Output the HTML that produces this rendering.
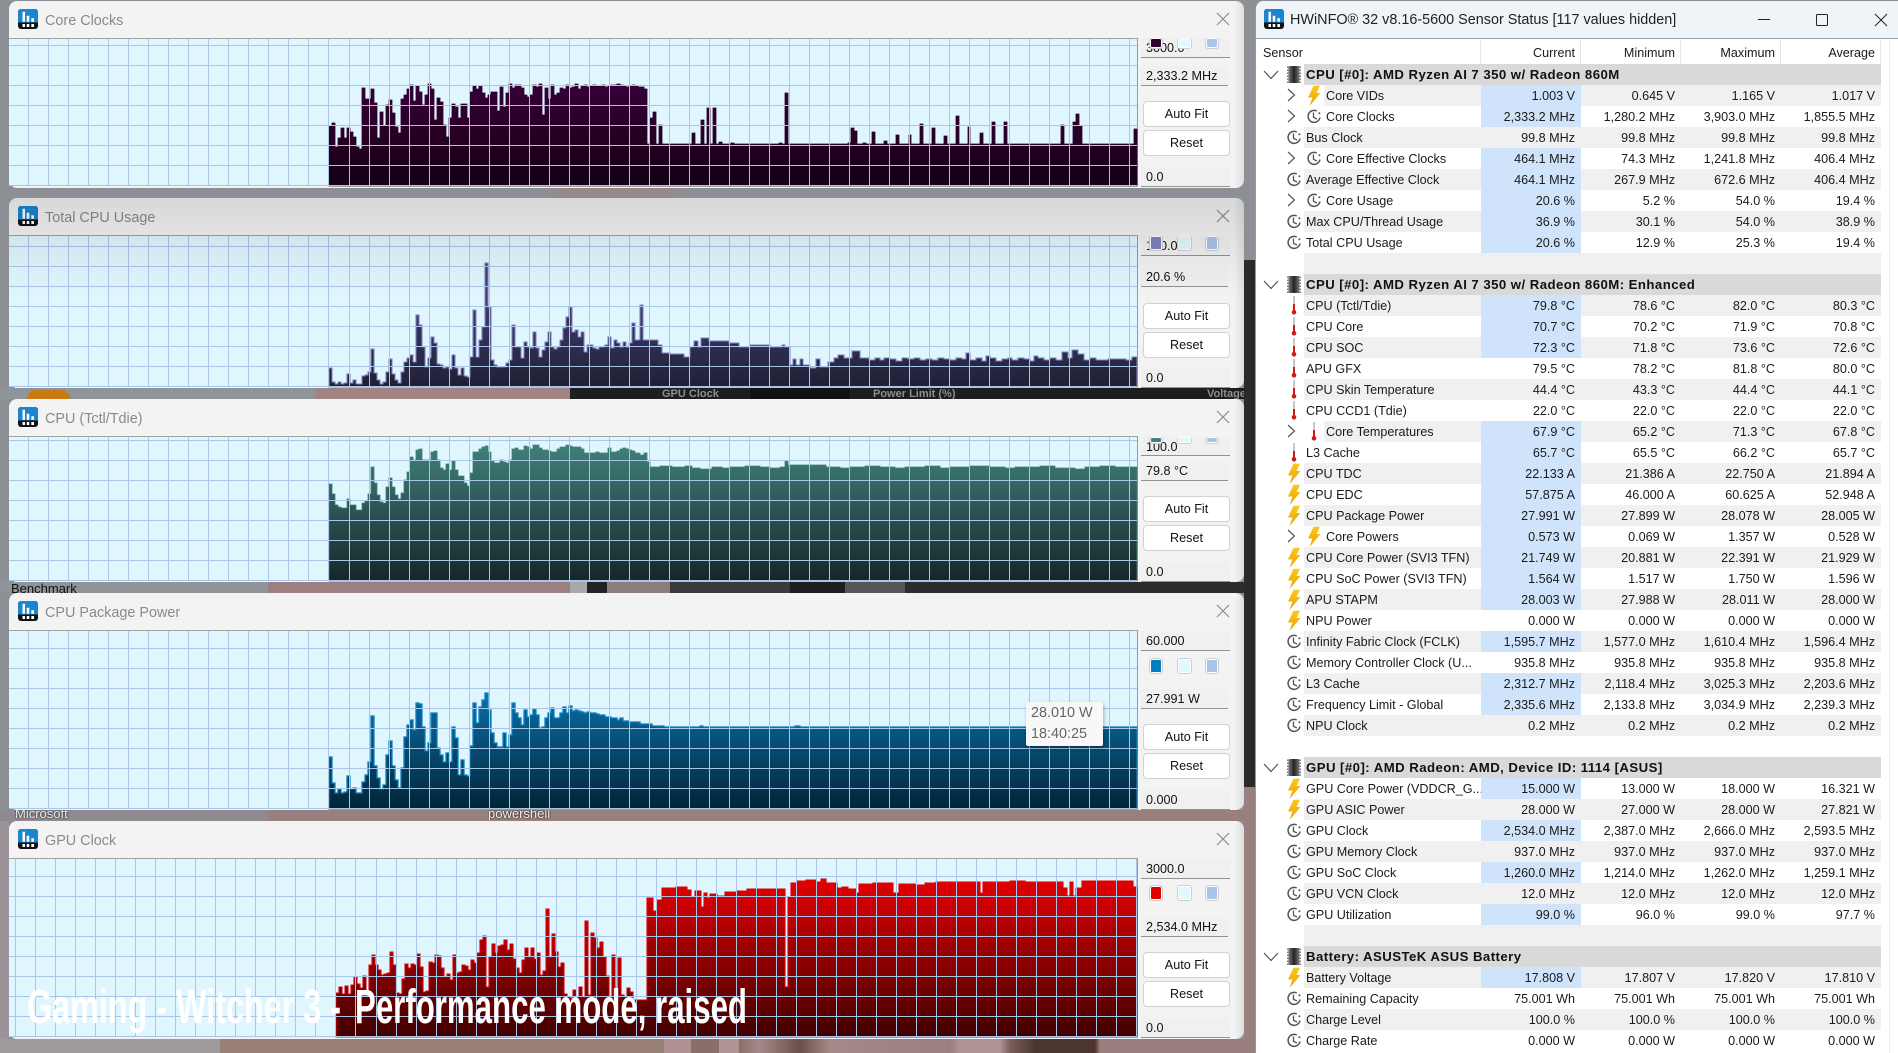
<!DOCTYPE html>
<html lang="en"><head><meta charset="utf-8"><title>HWiNFO Sensor Status</title>
<style>
html{margin:0;padding:0;width:1898px;height:1053px;overflow:hidden}
body{margin:0;padding:0;position:relative;width:1898px;height:1053px;overflow:hidden;background:#8c9094;font-family:"Liberation Sans",sans-serif;color:#1a1a1a}
.a{position:absolute}
.win{position:absolute;left:9px;width:1235px;background:linear-gradient(90deg,#f3f3f3 0,#f3f3f3 1225px,#dedede 1235px);border-radius:8px}
.dk{font-size:11px;color:#ddd;white-space:nowrap;overflow:hidden}
.tb{position:absolute;left:1141px;width:84px;height:19px;padding-left:5px;background:#f0f0f0;border-bottom:1px solid #929292;font-size:12.6px;line-height:20px;color:#111;white-space:nowrap;overflow:hidden}
.vb{width:82px}
.bt{position:absolute;left:1143px;width:85px;height:24px;background:#fff;border:1px solid #d2d2d2;border-radius:4px;font-size:12.6px;line-height:24px;text-align:center;color:#111}
.sw{position:absolute;box-sizing:border-box;width:14px;border:1px solid #cfcfcf;box-shadow:inset 0 0 0 1px #fff;border-radius:3px}
#g{position:absolute;left:0;top:0}
#main{position:absolute;left:1255px;top:1px;width:643px;height:1052px;background:#fff;border-radius:8px 0 0 0;border-left:1px solid #9a9a9a;box-sizing:border-box}
#tbar{position:absolute;left:0;top:0;right:0;height:37px;background:#eff4f9;border-bottom:1px solid #a2a2a2;border-radius:8px 0 0 0}
#ttl{position:absolute;left:1290px;top:10px;font-size:14.4px;line-height:21px;color:#222;white-space:nowrap}
#hd div{position:absolute;top:43px;font-size:12.6px;line-height:21px;color:#1a1a1a}
#hd i{position:absolute;top:40px;width:1px;height:24px;background:#e6e6e6}
#t{position:absolute;left:1255px;top:64px;width:626px;height:990px;overflow:hidden;font-size:12.6px;line-height:22px}
.r{position:relative;height:21px;margin-left:49px;padding-left:2px;white-space:nowrap}
.n{margin-left:69px}
.g{background:#f0f0f0}
.h{background:#d9d9d9;font-weight:bold;color:#111;font-size:13.2px;letter-spacing:.45px}
.r span{position:absolute;top:0;width:94px;height:21px;padding-right:6px;text-align:right;font-weight:normal}
.r span:nth-of-type(1){right:300px}
.r span:nth-of-type(2){right:200px}
.r span:nth-of-type(3){right:100px}
.r span:nth-of-type(4){right:0}
.b span:nth-of-type(1){background:#cfe4fb}
.i{position:absolute;left:-20px;top:0;width:20px;height:21px}
.x{position:absolute;left:-37px;top:2px;width:9px;height:16px}
.d{position:absolute;left:-41px;top:6px;width:16px;height:10px}
</style></head><body>

<div class="a" style="left:555px;top:187px;width:120px;height:11px;background:#95898a"></div>
<div class="a" style="left:0;top:388px;width:1255px;height:11px;background:#8f9499"></div>
<div class="a" style="left:316px;top:388px;width:254px;height:11px;background:#a08484"></div>
<div class="a" style="left:570px;top:388px;width:674px;height:11px;background:#1e1e1e"></div>
<div class="a" style="left:750px;top:388px;width:100px;height:11px;background:#121212"></div>
<div class="a" style="left:27px;top:390px;width:43px;height:9px;background:#c87a10;border-radius:20px 20px 0 0"></div>
<div class="a dk" style="left:662px;top:388px;width:60px;height:11px;color:#8e8e8e;font-weight:bold">GPU Clock</div>
<div class="a dk" style="left:873px;top:388px;width:100px;height:11px;color:#8e8e8e;font-weight:bold">Power Limit (%)</div>
<div class="a dk" style="left:1207px;top:388px;width:37px;height:11px;color:#8e8e8e;font-weight:bold">Voltage</div>
<div class="a" style="left:0;top:582px;width:270px;height:11px;background:#909498"></div>
<div class="a" style="left:268px;top:582px;width:302px;height:11px;background:#9c7f80"></div>
<div class="a" style="left:570px;top:582px;width:17px;height:11px;background:#a9a9ab"></div>
<div class="a" style="left:587px;top:582px;width:20px;height:11px;background:#222"></div>
<div class="a" style="left:607px;top:582px;width:63px;height:11px;background:#8d7d7d"></div>
<div class="a" style="left:670px;top:582px;width:120px;height:11px;background:#3a3a3a"></div>
<div class="a" style="left:790px;top:582px;width:55px;height:11px;background:#1e1e1e"></div>
<div class="a" style="left:845px;top:582px;width:60px;height:11px;background:#555"></div>
<div class="a" style="left:905px;top:582px;width:339px;height:11px;background:#2c2c2c"></div>
<div class="a dk" style="left:11px;top:582px;width:75px;height:11px;line-height:13px;font-size:13px;color:#111">Benchmark</div>
<div class="a" style="left:0;top:810px;width:270px;height:11px;background:#8f8a8f"></div>
<div class="a" style="left:268px;top:810px;width:976px;height:11px;background:#98807f"></div>
<div class="a dk" style="left:15px;top:809px;width:65px;height:12px;line-height:10px;font-size:13px;color:#eee;text-shadow:0 0 2px #000">Microsoft</div>
<div class="a dk" style="left:488px;top:809px;width:72px;height:12px;line-height:10px;font-size:13px;color:#eee;text-shadow:0 0 2px #000">powershell</div>
<div class="a" style="left:0;top:821px;width:9px;height:232px;background:#9b9398"></div>
<div class="a" style="left:0;top:1039px;width:1255px;height:14px;background:linear-gradient(90deg,#a09a9e 0,#a09a9e 220px,#988078 220px,#988078 664px,#b09090 664px,#b09090 691px,#8a6e6a 691px,#8a6e6a 719px,#b09494 719px,#b09494 739px,#8a6e6a 739px,#a58888 760px,#6a5048 800px,#a58888 830px,#9a7f7f 950px,#b09494 960px,#b09494 1000px,#7c5f5a 1010px,#4c3530 1035px,#4c3530 1095px,#9a7f7f 1100px,#9a7f7f 1255px)"></div>
<div class="a" style="left:1244px;top:260px;width:11px;height:527px;background:#2a2a2c"></div>
<div class="a" style="left:1244px;top:787px;width:11px;height:266px;background:#9a7f7f"></div>

<div class="win" style="top:1px;height:187px"></div>
<div class="win" style="top:198px;height:190px"></div>
<div class="win" style="top:399px;height:183px"></div>
<div class="win" style="top:593px;height:217px"></div>
<div class="win" style="top:821px;height:218px"></div>

<svg id="g" width="1898" height="1053" viewBox="0 0 1898 1053" xmlns="http://www.w3.org/2000/svg" font-family="Liberation Sans, sans-serif">
<defs>
<linearGradient id="f1" gradientUnits="userSpaceOnUse" x1="0" y1="85" x2="0" y2="186"><stop offset="0" stop-color="#350038"/><stop offset=".55" stop-color="#260022"/><stop offset="1" stop-color="#120016"/></linearGradient>
<linearGradient id="f2" gradientUnits="userSpaceOnUse" x1="0" y1="300" x2="0" y2="387"><stop offset="0" stop-color="#403c70"/><stop offset="1" stop-color="#1f2035"/></linearGradient>
<linearGradient id="f3" gradientUnits="userSpaceOnUse" x1="0" y1="445" x2="0" y2="581"><stop offset="0" stop-color="#40807a"/><stop offset="1" stop-color="#152628"/></linearGradient>
<linearGradient id="f4" gradientUnits="userSpaceOnUse" x1="0" y1="690" x2="0" y2="808"><stop offset="0" stop-color="#0a70a8"/><stop offset="1" stop-color="#022538"/></linearGradient>
<linearGradient id="f5" gradientUnits="userSpaceOnUse" x1="0" y1="880" x2="0" y2="1037"><stop offset="0" stop-color="#e40000"/><stop offset="1" stop-color="#400000"/></linearGradient>
<linearGradient id="by" x1="0" y1="0" x2="0" y2="1"><stop offset="0" stop-color="#ffc81e"/><stop offset="1" stop-color="#e8a000"/></linearGradient>
<linearGradient id="cg" x1="0" y1="0" x2="1" y2="0"><stop offset="0" stop-color="#7a7a7a"/><stop offset=".5" stop-color="#222"/><stop offset="1" stop-color="#7a7a7a"/></linearGradient>
<pattern id="h1" patternUnits="userSpaceOnUse" x="0" y="45" width="20" height="20"><path d="M0 .5H20" stroke="#a9c5e8"/></pattern>
<pattern id="h2" patternUnits="userSpaceOnUse" x="0" y="246" width="20" height="20"><path d="M0 .5H20" stroke="#a9c5e8"/></pattern>
<pattern id="h3" patternUnits="userSpaceOnUse" x="0" y="440" width="20" height="20"><path d="M0 .5H20" stroke="#a9c5e8"/></pattern>
<pattern id="h4" patternUnits="userSpaceOnUse" x="0" y="648" width="20" height="20"><path d="M0 .5H20" stroke="#a9c5e8"/></pattern>
<pattern id="h5" patternUnits="userSpaceOnUse" x="0" y="876" width="20" height="20"><path d="M0 .5H20" stroke="#a9c5e8"/></pattern>
<pattern id="v1" patternUnits="userSpaceOnUse" x="28" y="0" width="20" height="20"><path d="M.5 0V20" stroke="#a9c5e8"/></pattern>
<pattern id="v2" patternUnits="userSpaceOnUse" x="349" y="0" width="20" height="20"><path d="M.5 0V20" stroke="#a9c5e8"/></pattern>
<pattern id="v3" patternUnits="userSpaceOnUse" x="35" y="0" width="20" height="20"><path d="M.5 0V20" stroke="#a9c5e8"/></pattern>
<pattern id="v4" patternUnits="userSpaceOnUse" x="376" y="0" width="20" height="20"><path d="M.5 0V20" stroke="#a9c5e8"/></pattern>
<symbol id="logo" viewBox="0 0 20 20"><rect width="20" height="20" rx="3" fill="#111"/><path d="M3 0H17A3 3 0 0 1 20 3V13.5H0V3A3 3 0 0 1 3 0Z" fill="#1a86d0"/><path d="M4.5 2.7H7V12.7H4.5ZM8.7 6.7H11.3V12.7H8.7ZM13.3 9.3H16V12.7H13.3ZM4.5 15H7V18H4.5ZM8.7 15H11.3V18H8.7ZM13.3 15H16V18H13.3Z" fill="#fff"/></symbol>
<symbol id="bo" viewBox="0 0 20 21"><path d="M9.5 .8H16L12.5 8H16.5L5.5 21L8.5 12.5H4Z" fill="url(#by)"/></symbol>
<symbol id="cl" viewBox="0 0 20 21"><path d="M12.8 5A6 6 0 1 0 16 11.5" fill="none" stroke="#555" stroke-width="1.5"/><circle cx="15.4" cy="7.2" r="1" fill="#555"/><path d="M9.5 6.5V11.3L13 13" fill="none" stroke="#555" stroke-width="1.3"/></symbol>
<symbol id="th" viewBox="0 0 20 21"><path d="M10 1V10" stroke="#c6c6c6" stroke-width="2"/><path d="M10 9V17" stroke="#cf1818" stroke-width="2"/><circle cx="10" cy="17.3" r="2.3" fill="#cf1818"/></symbol>
<symbol id="ch" viewBox="0 0 20 21"><rect x="4.5" y="2" width="11" height="17" rx="1" fill="url(#cg)"/><path d="M3.7 2.5V19M16.3 2.5V19" stroke="#777" stroke-width="1.4" stroke-dasharray="1.5 1.5"/></symbol>
<symbol id="rt" viewBox="0 0 9 16"><path d="M1 2L7.5 8L1 14" fill="none" stroke="#555" stroke-width="1.2"/></symbol>
<symbol id="dn" viewBox="0 0 16 10"><path d="M1 1L8 8.5L15 1" fill="none" stroke="#555" stroke-width="1.2"/></symbol>
<symbol id="xx" viewBox="0 0 14 14"><path d="M1 1L13 13M13 1L1 13" stroke="#8c8c8c" stroke-width="1.2" fill="none"/></symbol>
</defs>

<g stroke="#a0a0a0"><path d="M9 38.5H1137M9 235.5H1137M9 436.5H1137M9 630.5H1137M9 858.5H1137" fill="none"/></g>
<g fill="#e0f6ff"><rect x="9" y="39" width="1128" height="147"/><rect x="9" y="236" width="1128" height="151"/><rect x="9" y="437" width="1128" height="144"/><rect x="9" y="631" width="1128" height="178"/><rect x="9" y="859" width="1128" height="178"/></g>
<path d="M1137.5 38V186M1137.5 235V387M1137.5 436V581M1137.5 630V809M1137.5 858V1037" stroke="#9a9a9a" fill="none"/>

<!-- chart 1 -->
<path fill="url(#f1)" stroke="#2c002e" stroke-width=".8" d="M329 186V126h3V123h3V147h3V138h3V128h3V138h3V128h3V132h3V137h3V147h3V149h3V88h3V99h3V99h3V89h3V103h3V138h3V112h3V126h3V105h3V100h3V113h3V127h3V133h3V99h3V95h3V89h3V85h3V101h3V86h3V92h3V105h3V95h3V84h3V89h3V120h3V98h3V102h3V125h3V137h3V118h3V104h3V107h3V118h3V104h3V104h3V118h3V92h3V86h3V89h3V86h3V93h3V98h3V95h3V92h3V92h3V111h3V87h3V107h3V93h3V84h3V88h3V85h3V85h3V88h3V95h3V97h3V95h3V85h3V87h3V84h3V115h3V88h3V99h3V85h3V95h3V93h3V88h3V89h3V85h3V88h3V87h3V84h3V89h3V86h3V85h3V87h3V86h3V85h3V86h3V86h3V85h3V87h3V86h3V85h3V85h3V84h3V85h3V86h3V87h3V86h3V85h3V86h3V87h3V87h3V89h3V144H1137V186ZM650 144V118h3V144ZM653 144V112h3V144ZM659 144V125h3V144ZM692 144V133h3V144ZM701 144V120h3V144ZM707 144V108h3V144ZM713 144V108h3V144ZM719 144V142h3V144ZM731 144V143h3V144ZM779 144V143h3V144ZM785 144V93h3V144ZM848 144V143h3V144ZM851 144V128h3V144ZM854 144V131h3V144ZM863 144V143h3V144ZM872 144V132h3V144ZM884 144V141h3V144ZM896 144V135h3V144ZM909 144V135h2V144ZM920 144V124h3V144ZM932 144V128h3V144ZM944 144V136h3V144ZM956 144V116h3V144ZM968 144V127h2V144ZM980 144V133h3V144ZM992 144V122h3V144ZM1004 144V122h3V144ZM1061 144V125h3V144ZM1073 144V122h3V144ZM1076 144V114h3V144ZM1079 144V126h3V144ZM1134 144V129h3V144Z"/>
<rect x="9" y="39" width="331" height="147" fill="url(#v1)"/><rect x="340" y="39" width="797" height="147" fill="url(#v2)"/><rect x="9" y="39" width="1128" height="147" fill="url(#h1)"/>

<!-- chart 2 -->
<path fill="url(#f2)" stroke="#8080c0" stroke-width="1.1" d="M329 387V368h3V382h3V384h3V382h3V384h3V383h3V374h3V383h3V380h3V384h3V384h3V376h3V375h3V372h3V349h3V373h3V380h3V384h3V382h3V372h3V359h3V374h3V380h3V383h3V372h3V362h3V358h3V355h3V362h3V315h3V325h3V347h3V367h3V358h3V337h3V343h3V364h3V365h3V368h3V367h3V369h3V355h3V368h3V375h3V368h3V376h3V377h3V357h3V310h3V357h3V340h3V327h3V263h3V307h3V360h3V365h3V367h3V367h3V367h3V363h3V360h3V325h3V347h3V347h3V358h3V342h3V347h3V348h3V332h3V348h3V357h3V350h3V342h3V332h3V347h3V349h3V347h3V340h3V328h3V317h3V307h3V332h3V330h3V337h3V332h3V352h3V345h3V345h3V348h3V349h3V347h3V347h3V345h3V337h3V348h3V340h3V343h3V347h3V342h3V347h3V343h3V323h3V340H640V305H643V340H658V345H662V353H670V354H684V357H690V347H694V341H698V347H701V338H709V341H729V343H739V347H750V345H770V347H782V345H785V347H790V365H793V359H796V365H800V359H803V365H810V368H816V359H820V367H828V362H834V358H838V355H844V358H852V351H860V358H869V360H875V358H880V360H884V358H890V359H896V361H902V358H908V359H914V358H920V360H926V359H932V360H938V358H944V359H950V360H956V358H962V359H966V353H970V360H976V358H982V361H986V356H990V358H996V361H1002V359H1008V358H1012V360H1018V358H1024V359H1030V361H1034V356H1038V358H1044V360H1050V358H1056V360H1062V352H1068V358H1072V350H1078V354H1084V360H1090V358H1096V360H1108V359H1126V360H1132V357H1137V387Z"/>
<rect x="9" y="236" width="331" height="151" fill="url(#v1)"/><rect x="340" y="236" width="797" height="151" fill="url(#v2)"/><rect x="9" y="236" width="1128" height="151" fill="url(#h2)"/>

<!-- chart 3 -->
<path fill="url(#f3)" stroke="#40807a" stroke-width=".8" d="M329 581V484h3V494h3V505h3V507h3V508h3V508h3V499h3V505h3V505h3V510h3V510h3V503h3V501h3V494h3V467h3V483h3V495h3V502h3V503h3V487h3V478h3V487h3V495h3V499h3V493h3V480h3V472h3V457h3V460h3V450h3V449h3V460h3V460h3V460h3V452h3V451h3V460h3V468h3V470h3V464h3V470h3V461h3V470h3V476h3V476h3V483h3V486h3V473h3V452h3V452h3V449h3V447h3V446h3V452h3V461h3V463h3V463h3V460h3V462h3V463h3V460h3V449h3V448h3V450h3V450h3V446h3V447h3V449h3V445h3V445h3V448h3V450h3V450h3V451h3V452h3V452h3V449h3V447h3V447h3V445h3V446h3V447h3V447h3V447h3V449h3V453h3V453h3V453h3V453h3V452h3V453h3V453h3V453h3V448h3V452h3V452h3V451h3V449h3V448h3V449h3V450h3V451h3V453H640V455H644V453H647V462H650V467H660V466H672V467H685V466H692V468H700V469H712V467H722V468H730V467H745V466H760V467H770V468H780V467H785V461H788V465H826V467H840V468H850V467H865V466H880V467H895V468H905V467H925V466H940V468H950V467H970V466H990V467H1005V468H1015V467H1040V466H1055V468H1075V469H1085V467H1100V466H1115V467H1137V581Z"/>
<rect x="9" y="437" width="331" height="144" fill="url(#v1)"/><rect x="340" y="437" width="797" height="144" fill="url(#v2)"/><rect x="9" y="437" width="1128" height="144" fill="url(#h3)"/>

<!-- chart 4 -->
<path fill="url(#f4)" stroke="#0a80c0" stroke-width="1.3" d="M329 809V757h3V783h3V793h3V789h3V793h3V792h3V776h3V789h3V788h3V793h3V793h3V782h3V775h3V762h3V716h3V766h3V778h3V789h3V785h3V755h3V741h3V766h3V780h3V788h3V768h3V737h3V725h3V720h3V730h3V703h3V704h3V727h3V751h3V743h3V713h3V713h3V748h3V755h3V762h3V753h3V762h3V727h3V738h3V775h3V760h3V775h3V776h3V746h3V703h3V723h3V707h3V700h3V693h3V710h3V733h3V743h3V747h3V747h3V733h3V747h3V735h3V703h3V713h3V718h3V725h3V710h3V717h3V715h3V709h3V715h3V728h3V727h3V718h3V713h3V708h3V718h3V718h3V713h3V707h3V713h3V706h3V711h3V710h3V711h3V712h3V713h3V712h3V713h3V713h3V714h3V715h3V715h3V717h3V717h3V718h3V718h3V720h3V718h3V721h3V721h3V722h3V722H640V724H652V726H664V727H700V726H703V727H795V726H800V727H1137V809Z"/>
<rect x="9" y="631" width="331" height="178" fill="url(#v1)"/><rect x="340" y="631" width="797" height="178" fill="url(#v2)"/><rect x="9" y="631" width="1128" height="178" fill="url(#h4)"/>

<!-- chart 5 -->
<path fill="url(#f5)" stroke="#e00000" stroke-width="1.1" d="M336 1037V993h3V987h3V994h3V986h3V994h3V985h3V977h3V984h3V988h3V976h3V993h3V965h3V955h3V965h3V970h3V975h3V974h3V973h3V952h3V965h3V993h3V994h3V979h3V964h3V968h3V964h3V965h3V954h3V967h3V992h3V991h3V962h3V963h3V955h3V956h3V968h3V977h3V974h3V980h3V955h3V973h3V972h3V965h3V966h3V970h3V960h3V963h3V953h3V940h3V936h3V987h3V957h3V944h3V953h3V946h3V945h3V940h3V950h3V944h3V959h3V968h3V973h3V960h3V948h3V957h3V948h3V959h3V953h3V975h3V971h3V909h3V957h3V934h3V952h3V967h3V963h3V994h3V997h3V998h3V990h3V997h3V987h3V997h3V921h3V995h3V933h3V938h3V948h3V942h3V957h3V976h3V997h3V955h3V997h3V958h3V995h3V997h3V988h3V992h3V1000H647V898H653V911H657V900H662V888H676V887H687V890H691V897H695V891H701V907H704V893H707V898H710V894H717V896H725V892H737V891H747V889H785V987H788V897H791V883H797V881H806V880H816V882H821V879H826V883H837V888H842V887H848V889H856V893H859V884H873V883H893V893H896V893H899V884H915V885H925V883H936V882H980V893H983V882H1010V881H1025V882H1063V888H1067V896H1070V882H1073V896H1076V888H1082V881H1133V887H1137V1037Z"/>
<rect x="9" y="859" width="356" height="178" fill="url(#v3)"/><rect x="365" y="859" width="772" height="178" fill="url(#v4)"/><rect x="9" y="859" width="1128" height="178" fill="url(#h5)"/>

<!-- logos and title text -->
<use href="#logo" x="18" y="9" width="20" height="20"/>
<use href="#logo" x="18" y="206" width="20" height="20"/>
<use href="#logo" x="18" y="407" width="20" height="20"/>
<use href="#logo" x="18" y="601" width="20" height="20"/>
<use href="#logo" x="18" y="829" width="20" height="20"/>
<g font-size="14.4" fill="#8a8a8a">
<text x="45" y="25">Core Clocks</text>
<text x="45" y="222">Total CPU Usage</text>
<text x="45" y="423">CPU (Tctl/Tdie)</text>
<text x="45" y="617">CPU Package Power</text>
<text x="45" y="845">GPU Clock</text>
</g>
<use href="#xx" x="1216" y="12" width="14" height="14"/>
<use href="#xx" x="1216" y="209" width="14" height="14"/>
<use href="#xx" x="1216" y="410" width="14" height="14"/>
<use href="#xx" x="1216" y="604" width="14" height="14"/>
<use href="#xx" x="1216" y="832" width="14" height="14"/>
</svg>

<!-- side panels -->
<div class="tb" style="top:38px">3000.0</div>
<div class="sw" style="left:1149px;top:38px;height:11px;background:#300030;border-top:0"></div>
<div class="sw" style="left:1177px;top:38px;height:11px;background:#e0f8ff;border-top:0;width:15px"></div>
<div class="sw" style="left:1205px;top:38px;height:11px;background:#a8c4e8;border-top:0"></div>
<div class="tb vb" style="top:66px">2,333.2 MHz</div>
<div class="bt" style="top:101px">Auto Fit</div><div class="bt" style="top:130px">Reset</div>
<div class="tb" style="top:167px">0.0</div>

<div class="tb" style="top:236px">100.0</div>
<div class="sw" style="left:1149px;top:236px;height:15px;background:#8080c0;border-top:0"></div>
<div class="sw" style="left:1177px;top:236px;height:15px;background:#e0f8ff;border-top:0;width:15px"></div>
<div class="sw" style="left:1205px;top:236px;height:15px;background:#a8c4e8;border-top:0"></div>
<div class="tb vb" style="top:267px">20.6 %</div>
<div class="bt" style="top:303px">Auto Fit</div><div class="bt" style="top:332px">Reset</div>
<div class="tb" style="top:368px">0.0</div>

<div class="tb" style="top:437px;height:18px;line-height:20px">100.0</div>
<div class="sw" style="left:1149px;top:437px;height:7px;background:#408080;border-top:0"></div>
<div class="sw" style="left:1177px;top:437px;height:7px;background:#e0f8ff;border-top:0;width:15px"></div>
<div class="sw" style="left:1205px;top:437px;height:7px;background:#a8c4e8;border-top:0"></div>
<div class="tb vb" style="top:461px">79.8 °C</div>
<div class="bt" style="top:496px">Auto Fit</div><div class="bt" style="top:525px">Reset</div>
<div class="tb" style="top:562px">0.0</div>

<div class="tb" style="top:631px">60.000</div>
<div class="sw" style="left:1149px;top:658px;height:16px;background:#0080c0"></div>
<div class="sw" style="left:1177px;top:658px;height:16px;background:#e0f8ff;width:15px"></div>
<div class="sw" style="left:1205px;top:658px;height:16px;background:#a8c4e8"></div>
<div class="tb vb" style="top:689px">27.991 W</div>
<div class="bt" style="top:724px">Auto Fit</div><div class="bt" style="top:753px">Reset</div>
<div class="tb" style="top:790px">0.000</div>

<div class="tb" style="top:859px">3000.0</div>
<div class="sw" style="left:1149px;top:885px;height:16px;background:#e00000"></div>
<div class="sw" style="left:1177px;top:885px;height:16px;background:#e0f8ff;width:15px"></div>
<div class="sw" style="left:1205px;top:885px;height:16px;background:#a8c4e8"></div>
<div class="tb vb" style="top:917px">2,534.0 MHz</div>
<div class="bt" style="top:952px">Auto Fit</div><div class="bt" style="top:981px">Reset</div>
<div class="tb" style="top:1018px">0.0</div>

<!-- tooltip -->
<div class="a" style="left:1026px;top:702px;width:77px;height:44px;background:#f8f8f8;border-radius:2px;box-shadow:1px 2px 4px rgba(0,0,0,.3);font-size:14.4px;line-height:21px;color:#666;padding:0;"><div style="padding:1px 0 0 5px;white-space:nowrap">28.010 W<br>18:40:25</div></div>

<!-- dim on second window -->
<div class="a" style="left:9px;top:198px;width:1235px;height:100px;background:linear-gradient(180deg,rgba(0,0,0,.11),rgba(0,0,0,0));border-radius:8px 8px 0 0"></div>

<!-- main window -->
<div id="main"><div id="tbar"></div></div>
<svg class="a" style="left:1264px;top:9px" width="20" height="20"><use href="#logo" width="20" height="20"/></svg>
<div id="ttl">HWiNFO® 32 v8.16-5600 Sensor Status [117 values hidden]</div>
<svg class="a" style="left:1756px;top:10px" width="136" height="20"><path d="M2 9.5H14" stroke="#222" fill="none"/><rect x="60.5" y="4.5" width="11" height="11" rx="1" fill="none" stroke="#222"/><path d="M119 4L131 16M131 4L119 16" stroke="#222" fill="none"/></svg>
<div id="hd">
<div style="left:1263px">Sensor</div>
<div style="right:323px">Current</div>
<div style="right:223px">Minimum</div>
<div style="right:123px">Maximum</div>
<div style="right:23px">Average</div>
<i style="left:1480px"></i><i style="left:1580px"></i><i style="left:1680px"></i><i style="left:1780px"></i><i style="left:1880px"></i>
</div>
<div class="a" style="left:1889px;top:39px;width:1px;height:1014px;background:#ececec"></div>

<div id="t">
<div class="r h"><svg class="d"><use href="#dn"/></svg><svg class="i"><use href="#ch"/></svg>CPU [#0]: AMD Ryzen AI 7 350 w/ Radeon 860M</div>
<div class="r n g b"><svg class="x"><use href="#rt"/></svg><svg class="i"><use href="#bo"/></svg>Core VIDs<span>1.003 V</span><span>0.645 V</span><span>1.165 V</span><span>1.017 V</span></div>
<div class="r n b"><svg class="x"><use href="#rt"/></svg><svg class="i"><use href="#cl"/></svg>Core Clocks<span>2,333.2 MHz</span><span>1,280.2 MHz</span><span>3,903.0 MHz</span><span>1,855.5 MHz</span></div>
<div class="r g"><svg class="i"><use href="#cl"/></svg>Bus Clock<span>99.8 MHz</span><span>99.8 MHz</span><span>99.8 MHz</span><span>99.8 MHz</span></div>
<div class="r n b"><svg class="x"><use href="#rt"/></svg><svg class="i"><use href="#cl"/></svg>Core Effective Clocks<span>464.1 MHz</span><span>74.3 MHz</span><span>1,241.8 MHz</span><span>406.4 MHz</span></div>
<div class="r g b"><svg class="i"><use href="#cl"/></svg>Average Effective Clock<span>464.1 MHz</span><span>267.9 MHz</span><span>672.6 MHz</span><span>406.4 MHz</span></div>
<div class="r n b"><svg class="x"><use href="#rt"/></svg><svg class="i"><use href="#cl"/></svg>Core Usage<span>20.6 %</span><span>5.2 %</span><span>54.0 %</span><span>19.4 %</span></div>
<div class="r g b"><svg class="i"><use href="#cl"/></svg>Max CPU/Thread Usage<span>36.9 %</span><span>30.1 %</span><span>54.0 %</span><span>38.9 %</span></div>
<div class="r b"><svg class="i"><use href="#cl"/></svg>Total CPU Usage<span>20.6 %</span><span>12.9 %</span><span>25.3 %</span><span>19.4 %</span></div>
<div class="r g"></div>
<div class="r h"><svg class="d"><use href="#dn"/></svg><svg class="i"><use href="#ch"/></svg>CPU [#0]: AMD Ryzen AI 7 350 w/ Radeon 860M: Enhanced</div>
<div class="r g b"><svg class="i"><use href="#th"/></svg>CPU (Tctl/Tdie)<span>79.8 °C</span><span>78.6 °C</span><span>82.0 °C</span><span>80.3 °C</span></div>
<div class="r b"><svg class="i"><use href="#th"/></svg>CPU Core<span>70.7 °C</span><span>70.2 °C</span><span>71.9 °C</span><span>70.8 °C</span></div>
<div class="r g b"><svg class="i"><use href="#th"/></svg>CPU SOC<span>72.3 °C</span><span>71.8 °C</span><span>73.6 °C</span><span>72.6 °C</span></div>
<div class="r"><svg class="i"><use href="#th"/></svg>APU GFX<span>79.5 °C</span><span>78.2 °C</span><span>81.8 °C</span><span>80.0 °C</span></div>
<div class="r g"><svg class="i"><use href="#th"/></svg>CPU Skin Temperature<span>44.4 °C</span><span>43.3 °C</span><span>44.4 °C</span><span>44.1 °C</span></div>
<div class="r"><svg class="i"><use href="#th"/></svg>CPU CCD1 (Tdie)<span>22.0 °C</span><span>22.0 °C</span><span>22.0 °C</span><span>22.0 °C</span></div>
<div class="r n g b"><svg class="x"><use href="#rt"/></svg><svg class="i"><use href="#th"/></svg>Core Temperatures<span>67.9 °C</span><span>65.2 °C</span><span>71.3 °C</span><span>67.8 °C</span></div>
<div class="r b"><svg class="i"><use href="#th"/></svg>L3 Cache<span>65.7 °C</span><span>65.5 °C</span><span>66.2 °C</span><span>65.7 °C</span></div>
<div class="r g b"><svg class="i"><use href="#bo"/></svg>CPU TDC<span>22.133 A</span><span>21.386 A</span><span>22.750 A</span><span>21.894 A</span></div>
<div class="r b"><svg class="i"><use href="#bo"/></svg>CPU EDC<span>57.875 A</span><span>46.000 A</span><span>60.625 A</span><span>52.948 A</span></div>
<div class="r g b"><svg class="i"><use href="#bo"/></svg>CPU Package Power<span>27.991 W</span><span>27.899 W</span><span>28.078 W</span><span>28.005 W</span></div>
<div class="r n b"><svg class="x"><use href="#rt"/></svg><svg class="i"><use href="#bo"/></svg>Core Powers<span>0.573 W</span><span>0.069 W</span><span>1.357 W</span><span>0.528 W</span></div>
<div class="r g b"><svg class="i"><use href="#bo"/></svg>CPU Core Power (SVI3 TFN)<span>21.749 W</span><span>20.881 W</span><span>22.391 W</span><span>21.929 W</span></div>
<div class="r b"><svg class="i"><use href="#bo"/></svg>CPU SoC Power (SVI3 TFN)<span>1.564 W</span><span>1.517 W</span><span>1.750 W</span><span>1.596 W</span></div>
<div class="r g b"><svg class="i"><use href="#bo"/></svg>APU STAPM<span>28.003 W</span><span>27.988 W</span><span>28.011 W</span><span>28.000 W</span></div>
<div class="r"><svg class="i"><use href="#bo"/></svg>NPU Power<span>0.000 W</span><span>0.000 W</span><span>0.000 W</span><span>0.000 W</span></div>
<div class="r g b"><svg class="i"><use href="#cl"/></svg>Infinity Fabric Clock (FCLK)<span>1,595.7 MHz</span><span>1,577.0 MHz</span><span>1,610.4 MHz</span><span>1,596.4 MHz</span></div>
<div class="r"><svg class="i"><use href="#cl"/></svg>Memory Controller Clock (U...<span>935.8 MHz</span><span>935.8 MHz</span><span>935.8 MHz</span><span>935.8 MHz</span></div>
<div class="r g b"><svg class="i"><use href="#cl"/></svg>L3 Cache<span>2,312.7 MHz</span><span>2,118.4 MHz</span><span>3,025.3 MHz</span><span>2,203.6 MHz</span></div>
<div class="r b"><svg class="i"><use href="#cl"/></svg>Frequency Limit - Global<span>2,335.6 MHz</span><span>2,133.8 MHz</span><span>3,034.9 MHz</span><span>2,239.3 MHz</span></div>
<div class="r g"><svg class="i"><use href="#cl"/></svg>NPU Clock<span>0.2 MHz</span><span>0.2 MHz</span><span>0.2 MHz</span><span>0.2 MHz</span></div>
<div class="r"></div>
<div class="r h"><svg class="d"><use href="#dn"/></svg><svg class="i"><use href="#ch"/></svg>GPU [#0]: AMD Radeon: AMD, Device ID: 1114 [ASUS]</div>
<div class="r b"><svg class="i"><use href="#bo"/></svg>GPU Core Power (VDDCR_G...<span>15.000 W</span><span>13.000 W</span><span>18.000 W</span><span>16.321 W</span></div>
<div class="r g"><svg class="i"><use href="#bo"/></svg>GPU ASIC Power<span>28.000 W</span><span>27.000 W</span><span>28.000 W</span><span>27.821 W</span></div>
<div class="r b"><svg class="i"><use href="#cl"/></svg>GPU Clock<span>2,534.0 MHz</span><span>2,387.0 MHz</span><span>2,666.0 MHz</span><span>2,593.5 MHz</span></div>
<div class="r g"><svg class="i"><use href="#cl"/></svg>GPU Memory Clock<span>937.0 MHz</span><span>937.0 MHz</span><span>937.0 MHz</span><span>937.0 MHz</span></div>
<div class="r b"><svg class="i"><use href="#cl"/></svg>GPU SoC Clock<span>1,260.0 MHz</span><span>1,214.0 MHz</span><span>1,262.0 MHz</span><span>1,259.1 MHz</span></div>
<div class="r g"><svg class="i"><use href="#cl"/></svg>GPU VCN Clock<span>12.0 MHz</span><span>12.0 MHz</span><span>12.0 MHz</span><span>12.0 MHz</span></div>
<div class="r b"><svg class="i"><use href="#cl"/></svg>GPU Utilization<span>99.0 %</span><span>96.0 %</span><span>99.0 %</span><span>97.7 %</span></div>
<div class="r g"></div>
<div class="r h"><svg class="d"><use href="#dn"/></svg><svg class="i"><use href="#ch"/></svg>Battery: ASUSTeK ASUS Battery</div>
<div class="r g b"><svg class="i"><use href="#bo"/></svg>Battery Voltage<span>17.808 V</span><span>17.807 V</span><span>17.820 V</span><span>17.810 V</span></div>
<div class="r"><svg class="i"><use href="#cl"/></svg>Remaining Capacity<span>75.001 Wh</span><span>75.001 Wh</span><span>75.001 Wh</span><span>75.001 Wh</span></div>
<div class="r g"><svg class="i"><use href="#cl"/></svg>Charge Level<span>100.0 %</span><span>100.0 %</span><span>100.0 %</span><span>100.0 %</span></div>
<div class="r"><svg class="i"><use href="#cl"/></svg>Charge Rate<span>0.000 W</span><span>0.000 W</span><span>0.000 W</span><span>0.000 W</span></div>
</div>

<!-- caption overlay -->
<svg class="a" style="left:0;top:0" width="1898" height="1053" viewBox="0 0 1898 1053"><g font-family="Liberation Sans, sans-serif" font-weight="bold" font-size="48" fill="#fff"><text x="27" y="1023" textLength="314" lengthAdjust="spacingAndGlyphs">Gaming - Witcher 3 -</text><text x="355" y="1023" textLength="392" lengthAdjust="spacingAndGlyphs">Performance mode, raised</text></g></svg>
</body></html>
